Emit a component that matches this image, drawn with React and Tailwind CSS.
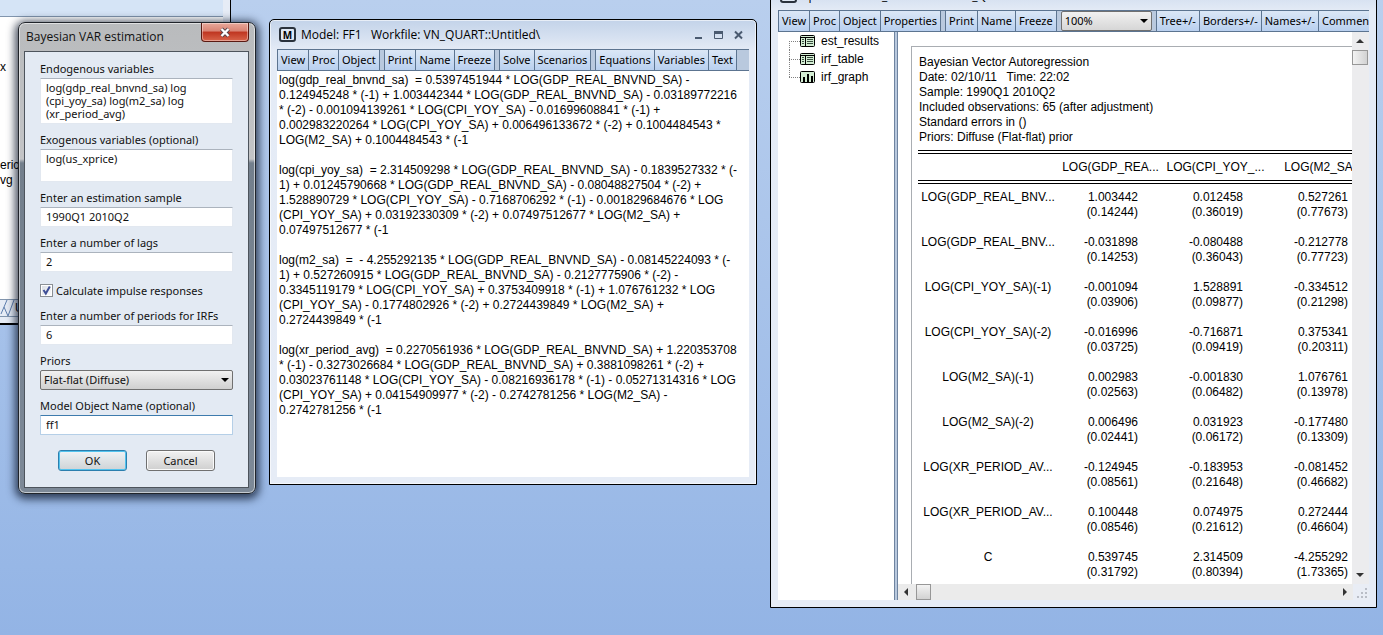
const EQUATIONS = [
  [
    "log(gdp_real_bnvnd_sa)  = 0.5397451944 * LOG(GDP_REAL_BNVND_SA) -",
    "0.124945248 * (-1) + 1.003442344 * LOG(GDP_REAL_BNVND_SA) - 0.03189772216",
    "* (-2) - 0.001094139261 * LOG(CPI_YOY_SA) - 0.01699608841 * (-1) +",
    "0.002983220264 * LOG(CPI_YOY_SA) + 0.006496133672 * (-2) + 0.1004484543 *",
    "LOG(M2_SA) + 0.1004484543 * (-1",
  ],
  [
    "log(cpi_yoy_sa)  = 2.314509298 * LOG(GDP_REAL_BNVND_SA) - 0.1839527332 * (-",
    "1) + 0.01245790668 * LOG(GDP_REAL_BNVND_SA) - 0.08048827504 * (-2) +",
    "1.528890729 * LOG(CPI_YOY_SA) - 0.7168706292 * (-1) - 0.001829684676 * LOG",
    "(CPI_YOY_SA) + 0.03192330309 * (-2) + 0.07497512677 * LOG(M2_SA) +",
    "0.07497512677 * (-1",
  ],
  [
    "log(m2_sa)  =  - 4.255292135 * LOG(GDP_REAL_BNVND_SA) - 0.08145224093 * (-",
    "1) + 0.527260915 * LOG(GDP_REAL_BNVND_SA) - 0.2127775906 * (-2) -",
    "0.3345119179 * LOG(CPI_YOY_SA) + 0.3753409918 * (-1) + 1.076761232 * LOG",
    "(CPI_YOY_SA) - 0.1774802926 * (-2) + 0.2724439849 * LOG(M2_SA) +",
    "0.2724439849 * (-1",
  ],
  [
    "log(xr_period_avg)  = 0.2270561936 * LOG(GDP_REAL_BNVND_SA) + 1.220353708",
    "* (-1) - 0.3273026684 * LOG(GDP_REAL_BNVND_SA) + 0.3881098261 * (-2) +",
    "0.03023761148 * LOG(CPI_YOY_SA) - 0.08216936178 * (-1) - 0.05271314316 * LOG",
    "(CPI_YOY_SA) + 0.04154909977 * (-2) - 0.2742781256 * LOG(M2_SA) -",
    "0.2742781256 * (-1",
  ],
];

const SUMMARY = [
  "Bayesian Vector Autoregression",
  "Date: 02/10/11   Time: 22:02",
  "Sample: 1990Q1 2010Q2",
  "Included observations: 65 (after adjustment)",
  "Standard errors in ()",
  "Priors: Diffuse (Flat-flat) prior",
];

// [name, coefficient / standard error pairs]
const ROWS = [
  ["LOG(GDP_REAL_BNV...", ["1.003442", "(0.14244)"], ["0.012458", "(0.36019)"], ["0.527261", "(0.77673)"]],
  ["LOG(GDP_REAL_BNV...", ["-0.031898", "(0.14253)"], ["-0.080488", "(0.36043)"], ["-0.212778", "(0.77723)"]],
  ["LOG(CPI_YOY_SA)(-1)", ["-0.001094", "(0.03906)"], ["1.528891", "(0.09877)"], ["-0.334512", "(0.21298)"]],
  ["LOG(CPI_YOY_SA)(-2)", ["-0.016996", "(0.03725)"], ["-0.716871", "(0.09419)"], ["0.375341", "(0.20311)"]],
  ["LOG(M2_SA)(-1)", ["0.002983", "(0.02563)"], ["-0.001830", "(0.06482)"], ["1.076761", "(0.13978)"]],
  ["LOG(M2_SA)(-2)", ["0.006496", "(0.02441)"], ["0.031923", "(0.06172)"], ["-0.177480", "(0.13309)"]],
  ["LOG(XR_PERIOD_AV...", ["-0.124945", "(0.08561)"], ["-0.183953", "(0.21648)"], ["-0.081452", "(0.46682)"]],
  ["LOG(XR_PERIOD_AV...", ["0.100448", "(0.08546)"], ["0.074975", "(0.21612)"], ["0.272444", "(0.46604)"]],
  ["C", ["0.539745", "(0.31792)"], ["2.314509", "(0.80394)"], ["-4.255292", "(1.73365)"]],
];

function ToolGroup({ items }) {
  return (
    <div className="flex shrink-0">
      {items.map((item) => (
        <button
          key={item}
          type="button"
          className="h-full shrink-0 whitespace-nowrap border-r border-[#5c7490] bg-linear-to-b from-[#dbe7f6] to-[#b9d0ef] px-[3px] first:border-l"
        >
          {item}
        </button>
      ))}
    </div>
  );
}

function Toolbar({ children }) {
  return (
    <div className="flex h-[22px] shrink-0 gap-1 overflow-hidden border-y border-[#5c7490] bg-[#b9c9de] font-['Noto_Sans'] text-[11px] leading-[18px]">
      {children}
    </div>
  );
}

function TitleBar({ icon, title, controls }) {
  return (
    <div className="flex h-[29px] shrink-0 items-center gap-[5px] px-[2px] font-['Open_Sans'] text-[12px]">
      <span className="flex h-[15px] w-[17px] items-center justify-center rounded-[3px] border-2 border-[#2a323c] bg-[#dfe8f4] text-[10px] font-bold leading-none">
        {icon}
      </span>
      <h2 className="flex-1 whitespace-pre">{title}</h2>
      {controls && (
        <div className="flex items-center gap-[11px] pr-1">
          <button type="button" aria-label="Minimize">
            <svg width="9" height="10" className="block"><path d="M1 8h7" stroke="#4a5a70" strokeWidth="2" /></svg>
          </button>
          <button type="button" aria-label="Maximize">
            <svg width="9" height="10" className="block">
              <path d="M0 2.500h9" stroke="#4a5a70" strokeWidth="3" />
              <path d="M.5 1v7.500h8V1" fill="none" stroke="#4a5a70" />
            </svg>
          </button>
          <button type="button" aria-label="Close">
            <svg width="9" height="10" className="block"><path d="M1 1.500l7 7M8 1.500l-7 7" stroke="#4a5a70" strokeWidth="2" /></svg>
          </button>
        </div>
      )}
    </div>
  );
}

function WorkfileWindow() {
  return (
    <section className="absolute left-0 top-0 flex h-[325px] w-[231px] flex-col border-b-2 border-r border-black bg-[#e6ecf6] pb-[6px] pr-[7px] font-['Liberation_Sans'] text-[12px] leading-[15px]">
      <div className="h-[17px] border-b border-[#8296ae] bg-[#d5e4f6]" />
      <div className="flex-1 bg-white pt-[43px]">
        <p>x</p>
        <p className="pt-[83px]">eric</p>
        <p>vg</p>
      </div>
      <svg width="60" height="18" className="shrink-0">
        <path d="M0 .5h60M0 17.500h60" stroke="#8296ae" />
        <path d="M1 15L7 1M4 8l4 9M8 17L14 1" fill="none" stroke="#5f7fae" />
        <text x="15" y="13" fontSize="12">U</text>
      </svg>
    </section>
  );
}

const fieldClass =
  "block w-full resize-none border border-[#e2e8f0] border-t-[#abb3bd] bg-white pl-[5px] outline-none";

function Field({ id, label, children }) {
  return (
    <div className="flex flex-col gap-[2px]">
      <label htmlFor={id} className="h-[14px]">{label}</label>
      {children}
    </div>
  );
}

function EstimationDialog() {
  return (
    <section className="absolute left-[18px] top-[22px] w-[238px] rounded-[7px] border border-[#20242a] bg-[linear-gradient(#b9bbbd,#c3c4c6_136px,#737f8c_140px,#7d8997)] pb-[5px] pl-[5px] pr-[6px] font-['Noto_Sans'] text-[11px] leading-[14px] text-[#111] shadow-[0_2px_9px_3px_rgba(10,20,40,0.75),inset_0_0_0_1px_rgba(255,255,255,0.55)]">
      <header className="flex h-[28px] items-start justify-between">
        <h2 className="pl-[2px] pt-[7px] font-['Open_Sans'] text-[12px]">Bayesian VAR estimation</h2>
        <button
          type="button"
          aria-label="Close"
          className="flex h-[19px] w-[48px] items-center justify-center rounded-b-[4px] border border-t-0 border-[#5a1a12] bg-[linear-gradient(#e9a99b,#d98373_45%,#bf3520_50%,#d8644a)] shadow-[inset_0_0_0_1px_rgba(255,255,255,0.4)]"
        >
          <svg width="12" height="11" viewBox="0 0 12 11">
            <path d="M2.500 2l7 7M9.500 2l-7 7" stroke="#54444a" strokeWidth="4" />
            <path d="M2.500 2l7 7M9.500 2l-7 7" stroke="#fff" strokeWidth="2.400" />
          </svg>
        </button>
      </header>
      <form
        className="flex flex-col gap-[9px] border border-[#4d545c] bg-[#e3eaf3] px-[15px] pb-[16px] pt-[10px]"
        onSubmit={(e) => e.preventDefault()}
      >
        <Field id="endog" label="Endogenous variables">
          <textarea
            id="endog"
            className={`${fieldClass} h-[46px] overflow-hidden pt-[2px] leading-[13px]`}
            defaultValue={"log(gdp_real_bnvnd_sa) log\n(cpi_yoy_sa) log(m2_sa) log\n(xr_period_avg)"}
          />
        </Field>
        <Field id="exog" label="Exogenous variables (optional)">
          <textarea
            id="exog"
            className={`${fieldClass} h-[33px] overflow-hidden pt-[2px] leading-[13px]`}
            defaultValue="log(us_xprice)"
          />
        </Field>
        <Field id="sample" label="Enter an estimation sample">
          <input id="sample" className={`${fieldClass} h-[20px] pb-[2px]`} defaultValue="1990Q1 2010Q2" />
        </Field>
        <Field id="lags" label="Enter a number of lags">
          <input id="lags" className={`${fieldClass} h-[20px] pb-[2px]`} defaultValue="2" />
        </Field>
        <label className="flex h-[19px] items-center gap-[3px]">
          <span className="relative flex h-[13px] w-[13px]">
            <input
              type="checkbox"
              defaultChecked
              className="peer h-[13px] w-[13px] appearance-none border border-[#8a8f94] bg-linear-to-br from-[#d6dbe2] to-white shadow-[inset_0_0_0_1px_white]"
            />
            <svg
              viewBox="0 0 13 13"
              className="pointer-events-none absolute inset-0 hidden peer-checked:block"
            >
              <path d="M3.500 6l2.300 3.500L9.800 2.500" fill="none" stroke="#3f4f96" strokeWidth="2" />
            </svg>
          </span>
          Calculate impulse responses
        </label>
        <Field id="periods" label="Enter a number of periods for IRFs">
          <input id="periods" className={`${fieldClass} h-[20px] pb-[2px]`} defaultValue="6" />
        </Field>
        <Field id="priors" label="Priors">
          <div className="relative">
            <select
              id="priors"
              className="block h-[20px] w-full appearance-none rounded-[2px] border border-[#707070] bg-linear-to-b from-[#f1f1f1] to-[#d0d0d0] pl-[3px]"
            >
              <option>Flat-flat (Diffuse)</option>
            </select>
            <svg width="8" height="4" className="pointer-events-none absolute right-[4px] top-[8px]">
              <path d="M0 0h8l-4 4z" />
            </svg>
          </div>
        </Field>
        <Field id="model" label="Model Object Name (optional)">
          <input
            id="model"
            className="block h-[20px] w-full rounded-[1px] border border-[#b5cfe7] border-t-[#3d7bad] bg-white pb-[2px] pl-[5px] outline-none"
            defaultValue="ff1"
          />
        </Field>
        <div className="flex justify-center gap-[19px] pt-[6px]">
          <button
            type="submit"
            className="h-[21px] w-[69px] rounded-[3px] border border-[#2c7fae] bg-linear-to-b from-[#eef3f6] to-[#cfd3d6] shadow-[inset_0_0_0_1px_#52c3ee]"
          >
            OK
          </button>
          <button
            type="button"
            className="h-[21px] w-[69px] rounded-[3px] border border-[#707070] bg-linear-to-b from-[#f2f2f2] to-[#cfcfcf] shadow-[inset_0_0_0_1px_#fafafa]"
          >
            Cancel
          </button>
        </div>
      </form>
    </section>
  );
}

function ModelWindow() {
  return (
    <section className="absolute left-[269px] top-[19px] flex h-[466px] w-[488px] flex-col rounded-t-[5px] border border-black bg-[linear-gradient(#c3d3e9,#e4ebf6_30px,#e6ecf6)] px-[7px] pb-[7px] shadow-[inset_0_0_0_1px_rgba(255,255,255,0.6)]">
      <TitleBar icon="M" title={"Model: FF1   Workfile: VN_QUART::Untitled\\"} controls />
      <Toolbar>
        <ToolGroup items={["View", "Proc", "Object"]} />
        <ToolGroup items={["Print", "Name", "Freeze"]} />
        <ToolGroup items={["Solve", "Scenarios"]} />
        <ToolGroup items={["Equations", "Variables", "Text"]} />
      </Toolbar>
      <div className="flex flex-1 flex-col gap-[15px] overflow-hidden bg-white px-[2px] pt-[2px] font-['Liberation_Sans'] text-[12px] leading-[15px]">
        {EQUATIONS.map((lines) => (
          <p key={lines[0]} className="whitespace-pre">
            {lines.join("\n")}
          </p>
        ))}
      </div>
    </section>
  );
}

function TableIcon() {
  return (
    <svg width="15" height="12" viewBox="0 0 15 12" className="block shrink-0">
      <rect x=".5" y=".5" width="14" height="11" rx="1" fill="#d3edd3" stroke="#000" />
      <path d="M1 2.500h13M5.500 2v9" stroke="#000" />
      <path d="M7 4.500h6M7 6.500h6M7 8.500h6M2 4.500h2M2 6.500h2M2 8.500h2" stroke="#3a4f40" />
    </svg>
  );
}

function GraphIcon() {
  return (
    <svg width="15" height="12" viewBox="0 0 15 12" className="block shrink-0">
      <rect x=".5" y=".5" width="14" height="11" rx="1" fill="#d3edd3" stroke="#000" />
      <path d="M4 6v5M8 3v8M12 5v6" stroke="#000" strokeWidth="2" />
    </svg>
  );
}

function ObjectTree() {
  const items = [
    ["est_results", TableIcon, "M.5 9v9M0 9.500h11"],
    ["irf_table", TableIcon, "M.5 0v18M0 9.500h11"],
    ["irf_graph", GraphIcon, "M.5 0v9M0 9.500h11"],
  ];
  return (
    <ul className="w-[116px] shrink-0 bg-white pl-[11px]">
      {items.map(([name, Icon, branch]) => (
        <li key={name} className="flex h-[18px] items-center">
          <svg width="11" height="18" className="block shrink-0">
            <path d={branch} fill="none" stroke="#808080" strokeDasharray="1 1" />
          </svg>
          <Icon />
          <span className="pl-[6px]">{name}</span>
        </li>
      ))}
    </ul>
  );
}

function ResultsPage() {
  return (
    <div className="min-w-0 flex-1 overflow-hidden bg-white pl-[13px] pt-[14px]">
      <div className="h-full overflow-hidden border-l border-t border-[#a9adb2] pl-[6px] pt-[8px]">
        <p className="whitespace-pre pl-px">{SUMMARY.join("\n")}</p>
        <table className="mt-[5px] w-[455px] table-fixed border-separate border-spacing-0">
          <colgroup>
            <col className="w-[140px]" />
            <col className="w-[105px]" />
            <col className="w-[105px]" />
            <col className="w-[105px]" />
          </colgroup>
          <thead>
            <tr className="h-[34px] *:border-y-4 *:border-double *:border-black *:p-0 *:font-normal">
              <td />
              <th>LOG(GDP_REA...</th>
              <th>LOG(CPI_YOY_...</th>
              <th>LOG(M2_SA)</th>
            </tr>
          </thead>
          <tbody>
            {ROWS.map(([name, ...cells], i) => (
              <tr key={i} className="h-[45px] align-top">
                <th className="px-0 pb-0 pt-[6px] font-normal">{name}</th>
                {cells.map(([coef, se]) => (
                  <td key={coef} className="pb-0 pl-0 pr-[25px] pt-[6px] text-right">
                    {coef}
                    <br />
                    {se}
                  </td>
                ))}
              </tr>
            ))}
          </tbody>
        </table>
      </div>
    </div>
  );
}

function ScrollArrow({ d }) {
  return (
    <svg width="16" height="16" viewBox="0 0 16 16" className="block shrink-0">
      <path d={d} fill="#333" />
    </svg>
  );
}

function SpoolWindow() {
  return (
    <section className="absolute -top-[20px] left-[770px] flex h-[628px] w-[607px] flex-col rounded-t-[5px] border border-black bg-[linear-gradient(#c3d3e9,#e4ebf6_30px,#e6ecf6)] px-[7px] pb-[7px]">
      <TitleBar icon="S" title={"Spool: BVARFF_1   Workfile: VN_QUART::Untitled\\"} />
      <Toolbar>
        <ToolGroup items={["View", "Proc", "Object", "Properties"]} />
        <ToolGroup items={["Print", "Name", "Freeze"]} />
        <div className="relative w-[91px] shrink-0">
          <select
            aria-label="Zoom"
            className="block h-full w-full appearance-none rounded-[2px] border border-[#707070] bg-linear-to-b from-[#f1f1f1] to-[#d6d6d6] pl-[3px]"
          >
            <option>100%</option>
          </select>
          <svg width="8" height="4" className="pointer-events-none absolute right-[4px] top-[8px]">
            <path d="M0 0h8l-4 4z" />
          </svg>
        </div>
        <ToolGroup items={["Tree+/-", "Borders+/-", "Names+/-", "Comments+/-"]} />
      </Toolbar>
      <div className="flex min-h-0 flex-1 font-['Liberation_Sans'] text-[12px] leading-[15px]">
        <ObjectTree />
        <div className="w-[4px] shrink-0 border-x border-[#6f84a0] bg-[#b9c9de]" />
        <div className="flex min-w-0 flex-1 flex-col">
          <div className="flex min-h-0 flex-1">
            <ResultsPage />
            <div className="flex w-[17px] shrink-0 flex-col bg-[#ececee] pr-px">
              <ScrollArrow d="M4 11l4-4 4 4z" />
              <div className="mt-[2px] h-[15px] border border-[#979797] bg-linear-to-r from-[#f3f3f3] to-[#d2d2d2]" />
              <div className="flex-1" />
              <ScrollArrow d="M4 5l4 4 4-4z" />
            </div>
          </div>
          <div className="flex h-[16px] shrink-0 bg-[#ebebeb]">
            <ScrollArrow d="M10 4L6 8l4 4z" />
            <div className="ml-[2px] w-[15px] border border-[#979797] bg-linear-to-b from-[#f3f3f3] to-[#d2d2d2]" />
            <div className="flex-1" />
            <ScrollArrow d="M6 4l4 4-4 4z" />
            <svg width="16" height="16" className="block bg-[#e9edf5]">
              <path d="M12 4h2v2h-2zM12 8h2v2h-2zM8 8h2v2h-2zM12 12h2v2h-2zM8 12h2v2h-2zM4 12h2v2h-2z" fill="#b9bdc6" />
            </svg>
          </div>
        </div>
      </div>
    </section>
  );
}

export default function App() {
  return (
    <main className="relative min-h-screen overflow-hidden bg-linear-to-b from-[#b9cfee] to-[#93b4e5] text-black">
      <WorkfileWindow />
      <ModelWindow />
      <SpoolWindow />
      <EstimationDialog />
    </main>
  );
}
